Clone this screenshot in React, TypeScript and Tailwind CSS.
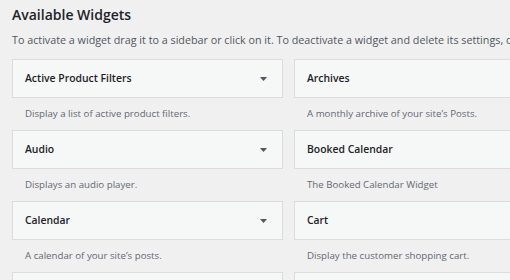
const widgets = [
  { left: { name: 'Active Product Filters', desc: 'Display a list of active product filters.' }, right: { name: 'Archives', desc: "A monthly archive of your site’s Posts." } },
  { left: { name: 'Audio', desc: 'Displays an audio player.' }, right: { name: 'Booked Calendar', desc: 'The Booked Calendar Widget' } },
  { left: { name: 'Calendar', desc: 'A calendar of your site’s posts.' }, right: { name: 'Cart', desc: 'Display the customer shopping cart.' } },
  { left: { name: '', desc: '' }, right: { name: '', desc: '' } },
];

function Widget({ name, desc }: { name: string; desc: string }) {
  return (
    <div className="flex flex-col">
      <div className="h-[39px] flex items-center justify-between border border-[#dcdcde] bg-[#f6f7f7] pl-[12px] pr-[15px]">
        <span className="text-[10.4px] font-semibold text-[#1d2327]">{name}</span>
        <svg width="7" height="4" viewBox="0 0 7 4" className="fill-[#50575e]">
          <path d="M0 0h7L3.5 4z" />
        </svg>
      </div>
      <div className="h-[32px] flex items-center pl-[13px] text-[9.7px] text-[#646970] whitespace-nowrap">{desc}</div>
    </div>
  );
}

export default function App() {
  return (
    <div className="w-[510px] h-[280px] overflow-hidden bg-[#f0f0f1] pl-[12px] pt-[3px] font-['Open_Sans',sans-serif]">
      <h2 className="text-[14px] font-semibold text-[#1d2327] leading-[24px]">Available Widgets</h2>
      <p className="mt-[3px] text-[10.75px] text-[#50575e] whitespace-nowrap leading-[20px]">
        To activate a widget drag it to a sidebar or click on it. To deactivate a widget and delete its settings, drag it back.
      </p>
      <div className="mt-[9px] grid grid-cols-[271px_271px] gap-x-[11px]">
        {widgets.map((row, i) => (
          <div key={i} className="contents">
            <Widget {...row.left} />
            <Widget {...row.right} />
          </div>
        ))}
      </div>
    </div>
  );
}
